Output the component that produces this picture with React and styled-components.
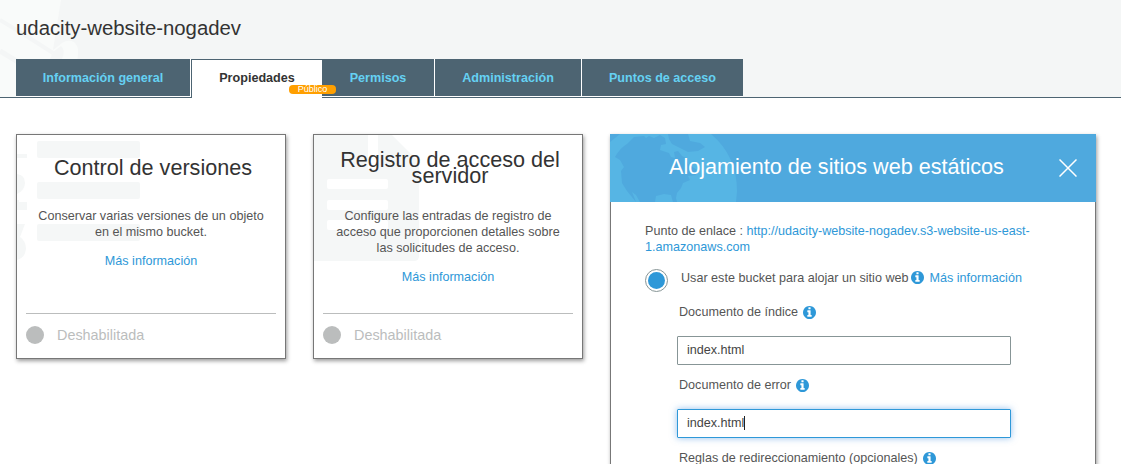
import React from "react";
import styled, { createGlobalStyle } from "styled-components";

const GlobalStyle = createGlobalStyle`
  * { box-sizing: border-box; }
  html, body { margin: 0; background: #fff; overflow: hidden; }
  body { font: 12.6px/16px "Liberation Sans", Arial, sans-serif; color: #555; }
`;

const Page = styled.div`
  height: 464px;
  overflow: hidden;
`;

const Header = styled.header`
  position: relative;
  height: 98px;
  padding: 16px 16px 0;
  background: #f4f6f6;
  border-bottom: 1px solid #4d6472;
`;

const HeaderArt = styled.svg`
  position: absolute;
  left: 0;
  top: 0;
`;

const BucketName = styled.h1`
  position: relative;
  margin: 0;
  height: 43px;
  font-size: 20.35px;
  font-weight: 400;
  line-height: 24px;
  color: #333;
`;

const Tabs = styled.nav`
  position: relative;
  display: flex;
  height: 39px;
`;

const Tab = styled.div`
  position: relative;
  width: ${(p) => p.$width}px;
  height: ${(p) => (p.$active ? 39 : 38)}px;
  padding-top: ${(p) => (p.$active ? 10 : 11)}px;
  text-align: center;
  font-weight: 700;
  line-height: 16px;
  color: ${(p) => (p.$active ? "#333" : "#65d1f3")};
  background: ${(p) => (p.$active ? "#fff" : "#4d6472")};
  border: 0 solid #fff;
  border-bottom-width: ${(p) => (p.$active ? 0 : 1)}px;
  border-right-width: ${(p) => (p.$divider ? 1 : 0)}px;
  ${(p) => p.$active && "border-color: #4d6472; border-top-width: 1px; border-left-width: 1px;"}
`;

const PublicBadge = styled.span`
  position: absolute;
  z-index: 1;
  left: 97px;
  top: 25px;
  width: 47px;
  height: 9px;
  border-radius: 4px;
  background: #ff9f00;
  color: #fff;
  font-size: 9px;
  font-weight: 400;
  line-height: 9px;
`;

const Main = styled.main`
  display: flex;
  align-items: flex-start;
  gap: 27px;
  padding: 36px 16px 0;
`;

const Card = styled.section`
  position: relative;
  display: flex;
  flex-direction: column;
  width: 270px;
  height: 225px;
  padding: 0 9px;
  border: 1px solid #777;
  background: #fff;
  box-shadow: 1px 2px 4px rgba(0, 0, 0, 0.4);
`;

const CardArt = styled.svg`
  position: absolute;
  left: 0;
  top: 0;
`;

const CardTitle = styled.h2`
  position: relative;
  display: flex;
  align-items: center;
  justify-content: center;
  height: 66px;
  margin: 0 0 7px;
  padding: 0 10px 0 14px;
  text-align: center;
  font-size: 21.6px;
  font-weight: 400;
  line-height: 16px;
  color: #333;
`;

const CardText = styled.p`
  position: relative;
  margin: 0 0 13px;
  padding: 0 10px;
  text-align: center;
`;

const Link = styled.a`
  color: #2e98d8;
  ${(p) => p.$centered && "position: relative; text-align: center;"}
`;

const Status = styled.div`
  display: flex;
  align-items: center;
  gap: 13px;
  height: 45px;
  margin-top: auto;
  padding-bottom: 2px;
  border-top: 1px solid #bbbdbd;
  font-size: 14.4px;
  color: #bbbdbd;
`;

const StatusDot = styled.span`
  width: 18px;
  height: 18px;
  border-radius: 50%;
  background: #bbbdbd;
`;

const Panel = styled.section`
  width: 486px;
  height: 500px;
  box-shadow: 1px 2px 4px rgba(0, 0, 0, 0.4);
`;

const PanelHeader = styled.div`
  position: relative;
  display: flex;
  align-items: center;
  justify-content: space-between;
  height: 68px;
  padding: 0 19px 0 59px;
  background: #4fa9de;
  overflow: hidden;
`;

const PanelTitle = styled.h2`
  position: relative;
  margin: -2px 0 0;
  font-size: 21.6px;
  font-weight: 400;
  line-height: 26px;
  color: #fff;
  white-space: nowrap;
`;

const PanelBody = styled.div`
  height: 432px;
  padding: 21px 34px 0;
  background: #fff;
  border: 1px solid #777;
  border-top: 0;
`;

const Endpoint = styled.p`
  margin: 0;
  white-space: nowrap;
`;

const Option = styled.div`
  display: flex;
  align-items: center;
  height: 24px;
  margin-top: 13px;
  white-space: nowrap;
`;

const Radio = styled.span`
  display: grid;
  place-items: center;
  width: 23px;
  height: 23px;
  margin-right: 13px;
  border: 1px solid #879596;
  border-radius: 50%;

  &::after {
    content: "";
    width: 17px;
    height: 17px;
    border-radius: 50%;
    background: #2e98d8;
  }
`;

const OptionText = styled.span`
  display: flex;
  align-items: center;
  margin-top: -5px;
`;

const Fields = styled.div`
  padding-left: 32px;
`;

const Label = styled.div`
  display: flex;
  align-items: center;
  gap: 5px;
  height: 16px;
  padding-left: 2px;
  margin-top: ${(p) => p.$top}px;
`;

const Field = styled.div`
  display: flex;
  align-items: center;
  width: 334px;
  height: 29px;
  margin-top: 16px;
  padding: 0 0 1px 9px;
  border: 1px solid ${(p) => (p.$focused ? "#2e98d8" : "#879596")};
  border-radius: 1px;
  color: #444;
  box-shadow: ${(p) => (p.$focused ? "0 0 7px rgba(60, 140, 220, 0.55)" : "none")};
`;

const Caret = styled.span`
  width: 1px;
  height: 14px;
  background: #222;
`;

const InfoSvg = styled.svg`
  flex: none;
  margin: ${(p) => p.$margin || "0"};
`;

const InfoIcon = ({ margin }) => (
  <InfoSvg $margin={margin} width="13" height="13" viewBox="128 128 1536 1536" fill="#2e98d8">
    <path d="M1152 1376v-160q0-14-9-23t-23-9h-96v-512q0-14-9-23t-23-9h-320q-14 0-23 9t-9 23v160q0 14 9 23t23 9h96v320h-96q-14 0-23 9t-9 23v160q0 14 9 23t23 9h448q14 0 23-9t9-23zM1024 480v-160q0-14-9-23t-23-9h-192q-14 0-23 9t-9 23v160q0 14 9 23t23 9h192q14 0 23-9t9-23zM1664 896q0 209-103 385.5t-279.5 279.5-385.5 103-385.5-103-279.5-279.5-103-385.5 103-385.5 279.5-279.5 385.5-103 385.5 103 279.5 279.5 103 385.5z" />
  </InfoSvg>
);

export default function App() {
  return (
    <Page>
      <GlobalStyle />
      <Header>
        <HeaderArt width="100" height="97" fill="none">
          <path d="M0 0H61L53 50L62 43Q68 39 74 42Q79 46 78 54L74 97H0Z" fill="#f9fbfa" />
          <path d="M0 20L28 37L53 53" stroke="#f4f6f6" strokeWidth="4" />
          <path d="M0 51L28 68" stroke="#f4f6f6" strokeWidth="5" />
          <path d="M53 52L61 46Q66 50 62 59H50Z" fill="#f4f6f6" />
        </HeaderArt>
        <BucketName>udacity-website-nogadev</BucketName>
        <Tabs>
          <Tab $width={175} $divider>Información general</Tab>
          <Tab $width={131} $active>
            Propiedades
            <PublicBadge>Público</PublicBadge>
          </Tab>
          <Tab $width={113} $divider>Permisos</Tab>
          <Tab $width={147} $divider>Administración</Tab>
          <Tab $width={161}>Puntos de acceso</Tab>
        </Tabs>
      </Header>
      <Main>
        <Card>
          <CardArt width="130" height="130" fill="#f5f7f7">
            <rect x="20" y="6" width="103" height="17" rx="2" />
            <rect x="20" y="47" width="103" height="17" rx="2" />
            <rect x="20" y="89" width="103" height="17" rx="2" />
            <path d="M0 19h10v4H0zM0 39Q8 40 8 48Q8 55 0 59zM0 65h2v2h8v8H0zM0 89h8L3 102Q9 106 9 114Q8 123 0 125z" />
          </CardArt>
          <CardTitle>Control de versiones</CardTitle>
          <CardText>Conservar varias versiones de un objeto en el mismo bucket.</CardText>
          <Link $centered>Más información</Link>
          <Status><StatusDot />Deshabilitada</Status>
        </Card>
        <Card>
          <CardArt width="130" height="130">
            <path d="M0 0H54V34H105V121Q105 126 100 126H0Z" fill="#f5f7f7" />
            <path d="M64 0H78L105 27V34H64Z" fill="#f5f7f7" />
            <g fill="#fff">
              <rect x="13" y="44" width="61" height="10" rx="2" />
              <rect x="13" y="65" width="61" height="10" rx="2" />
              <rect x="13" y="85" width="61" height="10" rx="2" />
            </g>
          </CardArt>
          <CardTitle>Registro de acceso del servidor</CardTitle>
          <CardText>Configure las entradas de registro de acceso que proporcionen detalles sobre las solicitudes de acceso.</CardText>
          <Link $centered>Más información</Link>
          <Status><StatusDot />Deshabilitada</Status>
        </Card>
        <Panel>
          <PanelHeader>
            <CardArt width="128" height="68">
              <path d="M0 8L10 0H101Q127 22 127 57L126 68H0Z" fill="#56b5e4" />
              <path d="M5 23Q10 14 17 10L24 3L34 2L36 4L39 2L44 4L50 1L55 4L56 10L51 11L50 16L59 19L61 23L65 24L64 18L68 17L72 22L76 24L78 30L87 36L86 41L78 42L80 46L73 49L71 54L67 59L66 64L67 68H63L61 61L54 60L46 62L45 68H30L26 61L22 58L26 68L17 57L12 49L11 37L14 33L10 26Z" fill="#4fa9de" />
              <path d="M58 0H78L80 7L90 9L95 13L88 17L78 18L70 14L62 10L59 5Z" fill="#4fa9de" />
            </CardArt>
            <PanelTitle>Alojamiento de sitios web estáticos</PanelTitle>
            <svg width="18" height="18" viewBox="0 0 18 18" stroke="#fff" strokeWidth="1.5">
              <path d="M.5 .5L17.5 17.5M17.5 .5L.5 17.5" />
            </svg>
          </PanelHeader>
          <PanelBody>
            <Endpoint>
              Punto de enlace : <Link>http://udacity-website-nogadev.s3-website-us-east-<br />1.amazonaws.com</Link>
            </Endpoint>
            <Option>
              <Radio />
              <OptionText>
                Usar este bucket para alojar un sitio web
                <InfoIcon margin="0 6px 0 2px" />
                <Link>Más información</Link>
              </OptionText>
            </Option>
            <Fields>
              <Label $top={12}>Documento de índice <InfoIcon /></Label>
              <Field>index.html</Field>
              <Label $top={12}>Documento de error <InfoIcon /></Label>
              <Field $focused>index.html<Caret /></Field>
              <Label $top={12}>Reglas de redireccionamiento (opcionales) <InfoIcon /></Label>
            </Fields>
          </PanelBody>
        </Panel>
      </Main>
    </Page>
  );
}
